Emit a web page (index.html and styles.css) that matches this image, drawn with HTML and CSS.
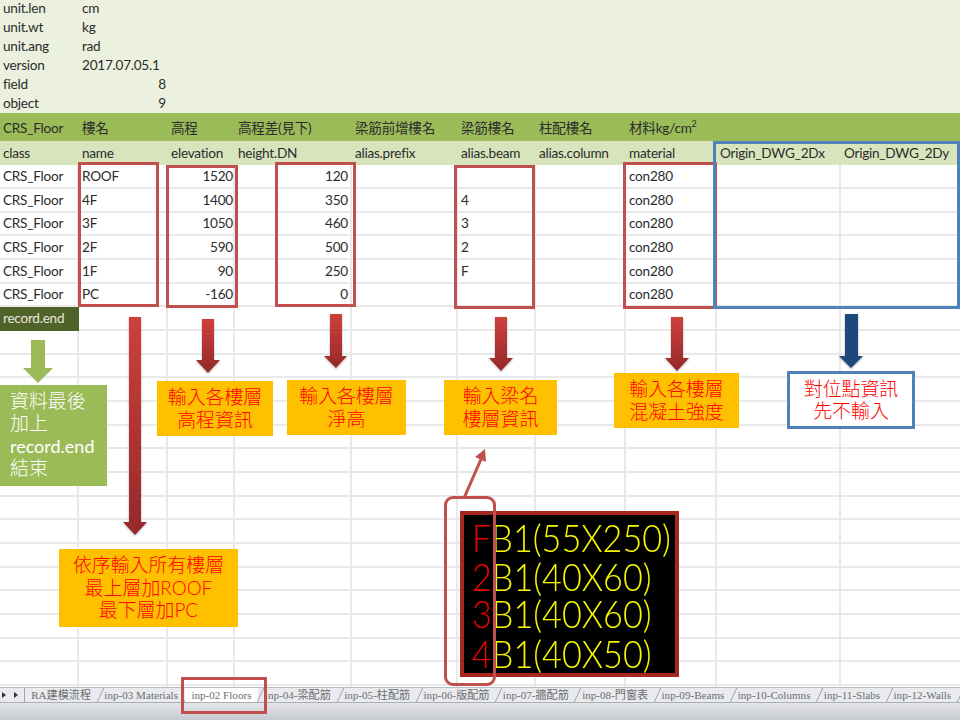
FILE: index.html
```html
<!DOCTYPE html>
<html>
  <head>
    <meta charset="UTF-8" />
    <title>inp-02 Floors</title>
    <link rel="stylesheet" href="styles.css">
  </head>
  <body>
    <div class="sheet">
      <!-- 參數區 -->
      <div class="meta">
        <div class="meta-row"><span>unit.len</span><span>cm</span></div>
        <div class="meta-row"><span>unit.wt</span><span>kg</span></div>
        <div class="meta-row"><span>unit.ang</span><span>rad</span></div>
        <div class="meta-row"><span>version</span><span>2017.07.05.1</span></div>
        <div class="meta-row"><span>field</span><span class="num">8</span></div>
        <div class="meta-row"><span>object</span><span class="num">9</span></div>
      </div>

      <div class="row row-title">
        <span>CRS_Floor</span><span>樓名</span><span>高程</span><span>高程差(見下)</span><span>梁筋前增樓名</span><span>梁筋樓名</span><span>柱配樓名</span><span>材料kg/cm<sup>2</sup></span><span></span><span></span>
      </div>
      <div class="row row-field">
        <span>class</span><span>name</span><span>elevation</span><span>height.DN</span><span>alias.prefix</span><span>alias.beam</span><span>alias.column</span><span>material</span><span>Origin_DWG_2Dx</span><span>Origin_DWG_2Dy</span>
      </div>

      <div class="row row-data">
        <span>CRS_Floor</span><span>ROOF</span><span class="num">1520</span><span class="num">120</span><span></span><span></span><span></span><span>con280</span><span></span><span></span>
      </div>
      <div class="row row-data">
        <span>CRS_Floor</span><span>4F</span><span class="num">1400</span><span class="num">350</span><span></span><span>4</span><span></span><span>con280</span><span></span><span></span>
      </div>
      <div class="row row-data">
        <span>CRS_Floor</span><span>3F</span><span class="num">1050</span><span class="num">460</span><span></span><span>3</span><span></span><span>con280</span><span></span><span></span>
      </div>
      <div class="row row-data">
        <span>CRS_Floor</span><span>2F</span><span class="num">590</span><span class="num">500</span><span></span><span>2</span><span></span><span>con280</span><span></span><span></span>
      </div>
      <div class="row row-data">
        <span>CRS_Floor</span><span>1F</span><span class="num">90</span><span class="num">250</span><span></span><span>F</span><span></span><span>con280</span><span></span><span></span>
      </div>
      <div class="row row-data">
        <span>CRS_Floor</span><span>PC</span><span class="num">-160</span><span class="num">0</span><span></span><span></span><span></span><span>con280</span><span></span><span></span>
      </div>
      <div class="row row-data">
        <span class="record-end">record.end</span><span></span><span></span><span></span><span></span><span></span><span></span><span></span><span></span><span></span>
      </div>
      <!-- 空白格線 -->
      <div class="blank-rows"></div>
    </div>

    <!-- 工作表分頁 -->
    <div class="tabbar">
      <div class="tab-strip">
        <div class="tab-nav"><i></i><i></i></div>
        <span class="tab tab-first">RA建模流程</span>
        <span class="tab">inp-03 Materials</span>
        <span class="tab tab-active">inp-02 Floors</span>
        <span class="tab">inp-04-梁配筋</span>
        <span class="tab">inp-05-柱配筋</span>
        <span class="tab">inp-06-版配筋</span>
        <span class="tab">inp-07-牆配筋</span>
        <span class="tab">inp-08-門窗表</span>
        <span class="tab">inp-09-Beams</span>
        <span class="tab">inp-10-Columns</span>
        <span class="tab">inp-11-Slabs</span>
        <span class="tab">inp-12-Walls</span>
      </div>
      <div class="tab-foot"></div>
    </div>

    <!-- 簡報標註 -->
    <div class="mark mark-name"></div>
    <div class="mark mark-elev"></div>
    <div class="mark mark-height"></div>
    <div class="mark mark-beam"></div>
    <div class="mark mark-material"></div>
    <div class="mark mark-origin"></div>
    <div class="mark mark-tab"></div>

    <svg class="arrows" width="960" height="720" viewBox="0 0 960 720">
      <defs>
        <linearGradient id="redFill" x1="0" y1="0" x2="0" y2="1">
          <stop offset="0" stop-color="#cd403c" />
          <stop offset="1" stop-color="#95292a" />
        </linearGradient>
        <filter id="soft" x="-30%" y="-10%" width="160%" height="120%">
          <feDropShadow dx="0" dy="1" stdDeviation="1" flood-color="#000" flood-opacity="0.3" />
        </filter>
      </defs>
      <polygon filter="url(#soft)" fill="url(#redFill)" points="129,317 141,317 141,522 147,522 135,535 123,522 129,522" />
      <polygon filter="url(#soft)" fill="url(#redFill)" points="202,319 214,319 214,360 220,360 208,373 196,360 202,360" />
      <polygon filter="url(#soft)" fill="url(#redFill)" points="330,314 342,314 342,356 347,356 336,368 324,356 330,356" />
      <polygon filter="url(#soft)" fill="url(#redFill)" points="495,317 507,317 507,358 513,358 501,371 489,358 495,358" />
      <polygon filter="url(#soft)" fill="url(#redFill)" points="671,317 683,317 683,358 689,358 677,371 665,358 671,358" />
      <polygon filter="url(#soft)" fill="#1f497d" points="845,314 858,314 858,356 863,356 851,368 839,356 845,356" />
      <polygon fill="#9bbb59" points="31,340 45,340 45,368 53,368 38,383 23,368 31,368" />
      <line x1="464" y1="498" x2="482" y2="457" stroke="#c0504d" stroke-width="3" />
      <polygon fill="#c0504d" points="485,449 486,462 475,457" />
    </svg>

    <div class="note note-end"><div>資料最後<br />加上<br /><span class="latin">record.end</span><br />結束</div></div>
    <div class="note note-orange note-floors"><div>依序輸入所有樓層<br />最上層加ROOF<br />最下層加PC</div></div>
    <div class="note note-orange note-elev"><div>輸入各樓層<br />高程資訊</div></div>
    <div class="note note-orange note-height"><div>輸入各樓層<br />淨高</div></div>
    <div class="note note-orange note-beam"><div>輸入梁名<br />樓層資訊</div></div>
    <div class="note note-orange note-material"><div>輸入各樓層<br />混凝土強度</div></div>
    <div class="note note-origin"><div>對位點資訊<br />先不輸入</div></div>

    <!-- CAD 截圖 -->
    <div class="cad">
      <div class="cad-line cad-line1"><b>F</b>B1(55X250)</div>
      <div class="cad-line cad-line2"><b>2</b>B1(40X60)</div>
      <div class="cad-line cad-line3"><b>3</b>B1(40X60)</div>
      <div class="cad-line cad-line4"><b>4</b>B1(40X50)</div>
    </div>
    <div class="mark mark-cad"></div>
  </body>
</html>
```

FILE: styles.css
```css
* {
  box-sizing: border-box;
}
body {
  margin: 0;
  width: 960px;
  height: 720px;
  overflow: hidden;
  position: relative;
  background: #ffffff;
  color: #2c2c2c;
  font-family: "Lato", "Noto Sans CJK TC", sans-serif;
  font-size: 13.6px;
  letter-spacing: -0.25px;
}
.sheet {
  height: 687px;
  overflow: hidden;
}

/* 參數區 */
.meta {
  height: 113px;
  background: #ebf1de;
}
.meta-row {
  display: grid;
  grid-template-columns: 79px 89px;
  height: 19px;
  line-height: 17px;
}
.meta-row span {
  padding-left: 3px;
}
.meta-row span.num {
  text-align: right;
  padding-right: 2px;
}

/* 表格 */
.row {
  display: grid;
  grid-template-columns: 79px 89px 67px 117px 106px 78px 90px 91px 124px 119px;
}
.row span {
  padding-left: 3px;
  white-space: nowrap;
}
.row span.num {
  text-align: right;
  padding-right: 2px;
}
.row span.num:nth-child(3) {
  padding-right: 0;
}
.row-title {
  height: 28px;
  line-height: 30px;
  background: #9bbb59;
}
.row-title sup {
  font-size: 9px;
  line-height: 0;
}
.row-field {
  height: 24px;
  line-height: 24px;
  background: #d8e4bc;
}
.row-data {
  height: 23.67px;
  line-height: 22px;
}
.row-data span {
  border-right: 2px solid #e9e9e9;
  border-bottom: 2px solid #e9e9e9;
}
.row-data span:last-child {
  border-right: 0;
}
.row-data .record-end {
  background: #4f6228;
  color: #e8e8e0;
  border-color: #4f6228;
}
.blank-rows {
  height: 400px;
  background:
    repeating-linear-gradient(to bottom, transparent 0, transparent 21.67px, #e9e9e9 21.67px, #e9e9e9 23.67px),
    linear-gradient(#e9e9e9, #e9e9e9) 77px 0 / 2px 100% no-repeat,
    linear-gradient(#e9e9e9, #e9e9e9) 166px 0 / 2px 100% no-repeat,
    linear-gradient(#e9e9e9, #e9e9e9) 233px 0 / 2px 100% no-repeat,
    linear-gradient(#e9e9e9, #e9e9e9) 350px 0 / 2px 100% no-repeat,
    linear-gradient(#e9e9e9, #e9e9e9) 456px 0 / 2px 100% no-repeat,
    linear-gradient(#e9e9e9, #e9e9e9) 534px 0 / 2px 100% no-repeat,
    linear-gradient(#e9e9e9, #e9e9e9) 624px 0 / 2px 100% no-repeat,
    linear-gradient(#e9e9e9, #e9e9e9) 715px 0 / 2px 100% no-repeat,
    linear-gradient(#e9e9e9, #e9e9e9) 839px 0 / 2px 100% no-repeat;
}

/* 分頁列 */
.tabbar {
  height: 33px;
  border-top: 1px solid #b9bdc3;
  font-family: "Liberation Serif", "Noto Sans CJK TC", serif;
  font-size: 11.1px;
  letter-spacing: 0;
  color: #6e6e6e;
}
.tab-strip {
  display: flex;
  height: 15px;
  background: #e9ebee;
  border-bottom: 1px solid #a9aeb5;
  line-height: 14px;
}
.tab-nav {
  width: 23.5px;
  flex: none;
  display: flex;
  align-items: center;
  gap: 8px;
  padding-left: 2px;
}
.tab-nav i {
  width: 0;
  height: 0;
  border-top: 3px solid transparent;
  border-bottom: 3px solid transparent;
  border-left: 4px solid #333333;
}
.tab {
  position: relative;
  flex: none;
  white-space: nowrap;
  padding: 0 6.7px;
}
.tab::after {
  content: "";
  position: absolute;
  right: -3px;
  top: 0;
  bottom: 0;
  width: 1px;
  background: #9ea3aa;
  transform: skewX(-25deg);
}
.tab-first {
  border-left: 1px solid #9ea3aa;
}
.tab-active {
  background: #ffffff;
}
.tab-foot {
  height: 17px;
  background: linear-gradient(#e4e6ea, #c6c9ce);
}

/* 標註框 */
.mark {
  position: absolute;
  border: 3px solid #c0504d;
}
.mark-name {
  left: 78px;
  top: 162px;
  width: 81px;
  height: 145px;
}
.mark-elev {
  left: 166px;
  top: 165px;
  width: 72px;
  height: 143px;
}
.mark-height {
  left: 275px;
  top: 162px;
  width: 81px;
  height: 145px;
}
.mark-beam {
  left: 454px;
  top: 165px;
  width: 81px;
  height: 144px;
}
.mark-material {
  left: 623px;
  top: 162px;
  width: 94px;
  height: 147px;
}
.mark-origin {
  left: 713px;
  top: 141px;
  width: 247px;
  height: 168px;
  border-color: #4f81bd;
}
.mark-tab {
  left: 181px;
  top: 677px;
  width: 86px;
  height: 37px;
}
.mark-cad {
  left: 444px;
  top: 496px;
  width: 52px;
  height: 190px;
  border-radius: 9px;
}
.arrows {
  position: absolute;
  left: 0;
  top: 0;
}

/* 說明文字 */
.note {
  position: absolute;
  font-size: 18.9px;
  font-weight: 300;
  line-height: 22.5px;
  letter-spacing: 0;
  text-align: center;
  display: flex;
  align-items: center;
  justify-content: center;
}
.note-orange {
  background: #ffc000;
  color: #ff0000;
}
.note-end {
  left: 0;
  top: 385px;
  width: 107px;
  height: 101px;
  background: #9bbb59;
  color: #ffffff;
  justify-content: flex-start;
  text-align: left;
  padding: 0 0 2px 10px;
}
.note-end .latin {
  font-size: 18px;
  font-weight: 400;
}
.note-floors {
  left: 59px;
  top: 549px;
  width: 179px;
  height: 78px;
}
.note-elev {
  left: 157px;
  top: 381px;
  width: 116px;
  height: 55px;
}
.note-height {
  left: 287px;
  top: 380px;
  width: 119px;
  height: 55px;
}
.note-beam {
  left: 444px;
  top: 380px;
  width: 113px;
  height: 55px;
}
.note-material {
  left: 614px;
  top: 373px;
  width: 125px;
  height: 55px;
}
.note-origin {
  left: 787px;
  top: 371px;
  width: 128px;
  height: 58px;
  background: #ffffff;
  border: 3px solid #4f81bd;
  color: #ff0000;
}

/* CAD 截圖 */
.cad {
  position: absolute;
  left: 460px;
  top: 511px;
  width: 219px;
  height: 166px;
  background: #000000;
  border: 4px solid #a5281e;
  overflow: hidden;
}
.cad-line {
  position: absolute;
  left: 8px;
  font-family: "Lato", sans-serif;
  font-weight: 300;
  font-size: 38px;
  line-height: 30px;
  font-variant-numeric: tabular-nums;
  letter-spacing: 0;
  color: #f6f600;
  white-space: nowrap;
  transform: scaleX(0.9);
  transform-origin: left top;
}
.cad-line b {
  font-weight: 300;
  color: #ee0000;
}
.cad-line1 {
  top: 7px;
}
.cad-line2 {
  top: 46px;
}
.cad-line3 {
  top: 83px;
}
.cad-line4 {
  top: 123px;
}
```
